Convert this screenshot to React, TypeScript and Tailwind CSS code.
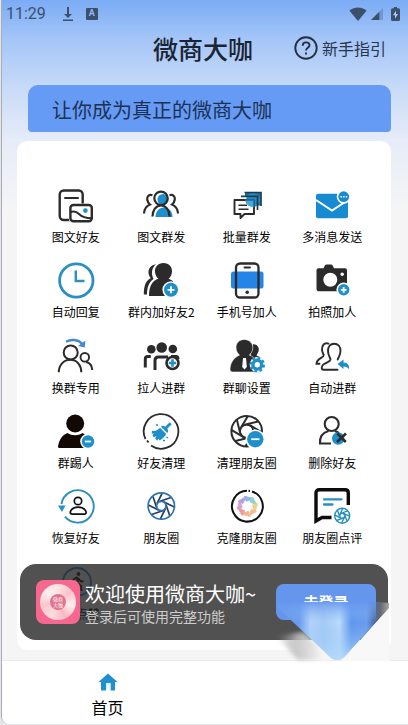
import type { ReactNode } from 'react'

interface MenuItem {
  label: string
  icon: ReactNode
}

const DARK = '#2b2b2b'
const BLUE = '#1f8fcb'

const Badge = ({ cx, cy, r, plus = false }: { cx: number; cy: number; r: number; plus?: boolean }) => (
  <>
    <circle cx={cx} cy={cy} r={r + 1.6} fill="#fff" />
    <circle cx={cx} cy={cy} r={r} fill={BLUE} />
    <path
      d={`M${cx - r / 2} ${cy}h${r}${plus ? `M${cx} ${cy - r / 2}v${r}` : ''}`}
      stroke="#fff"
      strokeWidth="1.8"
    />
  </>
)

// Camera shutter: each blade edge runs from the inner opening to the rim
const Aperture = ({ cx, cy, r, inner, ring, blade, width = 1.8 }: {
  cx: number
  cy: number
  r: number
  inner: number
  ring: string
  blade: string
  width?: number
}) => (
  <g transform={`translate(${cx} ${cy})`} strokeWidth={width} fill="none">
    {[0, 45, 90, 135, 180, 225, 270, 315].map(angle => (
      <path
        key={angle}
        d={`M${-inner * 0.3} ${-inner}L${r * 0.74} ${-r * 0.64}`}
        stroke={blade}
        transform={`rotate(${angle})`}
      />
    ))}
    <circle r={inner} stroke={ring} />
    <circle r={r} stroke={ring} />
  </g>
)

const Icon = ({ children }: { children: ReactNode }) => (
  <svg viewBox="0 0 36 36" className="h-9 w-9 overflow-visible" fill="none" aria-hidden="true">
    {children}
  </svg>
)

const wheelColors = ['#f0b48e', '#ec9a9a', '#d99fcf', '#b3a0dc', '#93b2e3', '#8fd3d3', '#f3cf84', '#f2bd95']

const menuItems: MenuItem[] = [
  {
    label: '图文好友',
    icon: (
      <Icon>
        <rect x="1.7" y="3.5" width="23" height="29.5" rx="4" stroke={DARK} strokeWidth="2.4" />
        <path d="M7 11h13" stroke={DARK} strokeWidth="2" strokeLinecap="round" />
        <rect x="11" y="16.5" width="25" height="19" rx="3" fill="#fff" />
        <rect x="12.4" y="18" width="21.4" height="16.2" rx="3" stroke={DARK} strokeWidth="2.4" />
        <path d="M12.5 25c4-1.5 6-.5 8.5 2s5 4.2 12.5 4.2" stroke={DARK} strokeWidth="2" />
        <circle cx="27.4" cy="23.6" r="2.3" fill={BLUE} />
      </Icon>
    ),
  },
  {
    label: '图文群发',
    icon: (
      <Icon>
        <circle cx="20" cy="12.5" r="5.5" fill={BLUE} />
        <path d="M12.5 30c0-5.5 3.5-9.500 8.500-9.500s8.500 4 8.500 9.500z" fill={BLUE} />
        <circle cx="18" cy="11.3" r="6.7" stroke={DARK} strokeWidth="2.2" />
        <path
          d="M9.5 29.500c0-6.5 3.5-11 8.500-11s8.500 4.500 8.500 11M9.500 8.200C6 7 3.800 9.500 4.200 12.500c.3 2.200 1.300 3.800 2.800 5C3.500 19 1.200 22 1 26.500M26.500 8.200c3.500-1.200 5.700 1.300 5.300 4.300-.3 2.200-1.300 3.800-2.800 5 3.500 1.500 5.800 4.500 6 9"
          stroke={DARK}
          strokeWidth="2.2"
        />
      </Icon>
    ),
  },
  {
    label: '批量群发',
    icon: (
      <Icon>
        <path d="M16 5.5h15.500v13H28V9H16z" fill="#1b6f9d" />
        <circle cx="24" cy="13" r="7" fill={BLUE} />
        <path d="M15.500 5.500H32V19M12 9.300h16.500V23" stroke="#22394a" strokeWidth="1.700" />
        <path d="M5.500 13h19.500v14h-9.500l-4 4v-4h-6z" fill="#fff" stroke={DARK} strokeWidth="1.900" strokeLinejoin="round" />
        <path d="M16 12.200h9.600V20a8 8 0 0 1-9.600-7.800" fill={BLUE} opacity=".8" />
        <path d="M9.500 18.300H18M9.500 22.300h10" stroke={DARK} strokeWidth="1.600" />
      </Icon>
    ),
  },
  {
    label: '多消息发送',
    icon: (
      <Icon>
        <rect x="2" y="6.700" width="32" height="24.500" rx="2" fill="#168bd2" />
        <path d="m2 13 16 10.500L34 13" stroke="#fff" strokeWidth="2" />
        <circle cx="29.700" cy="9.700" r="7" fill="#fff" />
        <circle cx="29.700" cy="9.700" r="5.400" fill="#168bd2" />
        <path d="M26.500 9.700h6.800" stroke="#fff" strokeWidth="1.500" strokeDasharray="1.500 1.100" />
      </Icon>
    ),
  },
  {
    label: '自动回复',
    icon: (
      <Icon>
        <circle cx="18.300" cy="18.500" r="16.700" stroke="#2b8fc2" strokeWidth="2.800" />
        <path d="M17.800 8.500V19h8.700" stroke="#2b8fc2" strokeWidth="2.400" />
      </Icon>
    ),
  },
  {
    label: '群内加好友2',
    icon: (
      <Icon>
        <path d="M13 2.300C8 3 5 6.800 5.500 11c.3 2.500 1.300 4 2.300 5.200C3.500 18 .8 22.500.8 32.500H4C4 25 6 20.500 10.500 17 8 12 8.500 6 13 2.300" fill={DARK} />
        <path d="M20.500 1c-5.500 0-9 4-8.500 9 .3 3 1.500 5.200 3.500 6.800C9.500 18.500 6 24 6 34h29c0-9-3-15-9.500-17.200 2-1.600 3.200-3.800 3.500-6.800.5-5-3-9-8.500-9" fill={DARK} />
        <path d="M30 18h7v16h-7z" fill="#fff" />
        <Badge cx={28} cy={27.8} r={7} plus />
      </Icon>
    ),
  },
  {
    label: '手机号加人',
    icon: (
      <Icon>
        <rect x="2" y="9.500" width="32.500" height="17" rx="2.500" fill="#2584e8" />
        <rect x="7" y="1.500" width="22.500" height="34" rx="4" stroke={DARK} strokeWidth="2.300" />
        <path d="M15.500 5.500H21" stroke={DARK} strokeWidth="1.800" strokeLinecap="round" />
        <circle cx="18.200" cy="30.300" r="1.800" fill={DARK} />
      </Icon>
    ),
  },
  {
    label: '拍照加人',
    icon: (
      <Icon>
        <path d="M4.500 6.200h5L11 3.300q.5-.8 1.500-.8h4.500q1 0 1.500.8L20 6.200h11q2 0 2 2v19q0 2-2 2H4.500q-2 0-2-2v-19q0-2 2-2" fill={DARK} />
        <circle cx="16.300" cy="17.800" r="7" fill="#fff" />
        <circle cx="28.200" cy="12.200" r="1.700" fill="#fff" />
        <Badge cx={29.7} cy={27.8} r={5.7} plus />
      </Icon>
    ),
  },
  {
    label: '换群专用',
    icon: (
      <Icon>
        <circle cx="12.700" cy="14.500" r="7" stroke={DARK} strokeWidth="2" />
        <circle cx="26.800" cy="19.300" r="4.300" stroke={DARK} strokeWidth="1.900" />
        <path d="M.8 34.300c0-7 4.800-12.500 11.500-12.500s11 5.500 11 12.500M28 24c4 .7 6 3.500 6.300 8" stroke={DARK} strokeWidth="2" />
        <path d="M8 3.700C13 1 20 1.200 24.300 6" stroke="#4389cf" strokeWidth="2.400" />
        <path d="m27.500 2.500-.8 7-6.700-1.500z" fill="#4389cf" />
      </Icon>
    ),
  },
  {
    label: '拉人进群',
    icon: (
      <Icon>
        <circle cx="8.300" cy="11.200" r="4.300" fill={DARK} />
        <circle cx="18.700" cy="9.500" r="5.300" fill={DARK} />
        <circle cx="29.800" cy="11" r="4.300" fill={DARK} />
        <path d="M2.300 29.500V21q0-2.500 2.500-2.500h3M12 32v-9.500q0-3.500 3.500-3.500H25M28 18.500h5q2 0 2 2.500" stroke={DARK} strokeWidth="3" />
        <circle cx="29.500" cy="25" r="6" fill="#fff" stroke={DARK} strokeWidth="2.600" />
        <path d="M25.800 25h7.400M29.500 21.300v7.400" stroke={BLUE} strokeWidth="2.600" />
      </Icon>
    ),
  },
  {
    label: '群聊设置',
    icon: (
      <Icon>
        <path d="M24 6.300c5-.5 7.500 5 4.500 9.200l-1 2.200L31 19v5H20z" fill={DARK} />
        <path d="M15.300 1.500c-5 0-8.500 3.500-8.300 8.500.2 3 1.500 5.500 3.500 7C4.500 20 1 25 1 31.500q0 2.500 2.500 2.500H27V23c-1.500-3-4-5-6.700-6 2-1.500 3.300-4 3.500-7 .2-5-3.500-8.500-8.500-8.500" fill={DARK} stroke="#fff" strokeWidth=".6" />
        <path d="M14 20h3l.8 9-2.300 2.500-2.300-2.500z" fill="#fff" />
        <circle cx="28.300" cy="26.700" r="7.600" fill="#fff" />
        <circle cx="28.300" cy="26.700" r="4.400" stroke={BLUE} strokeWidth="3.400" />
        <circle cx="28.300" cy="26.700" r="6.700" stroke={BLUE} strokeWidth="2" strokeDasharray="2.900 2.360" />
      </Icon>
    ),
  },
  {
    label: '自动进群',
    icon: (
      <Icon>
        <path
          d="M14.500 5.600C10.500 4 7.500 7.500 8 12c.2 2 1 3.500 1.700 5 .5 3-7 3-7.200 8.700h3M23.500 31.800H9.500c-2.500 0-2-3.500-.5-5 2.500-2.500 7-2.500 7.500-5.300.2-1.500-2.500-3.500-2.500-8.500 0-4.500 2.500-7.300 6.200-7.300s6.300 2.800 6.300 7.300c0 4.500-2.200 6.500-2.800 8.500"
          stroke={DARK}
          strokeWidth="1.900"
          strokeLinecap="round"
        />
        <path d="m23.500 26 6-4.500v3c4 .2 6 2.500 5.700 7-1.500-2.300-3-3-5.700-3v2.500z" fill={BLUE} />
      </Icon>
    ),
  },
  {
    label: '群踢人',
    icon: (
      <Icon>
        <circle cx="17.200" cy="10.500" r="9" fill="#120804" />
        <path d="M9.500 20c4.500 3 10.500 3 15 0 2.500 1 4 3 4 6v9H1.500Q0 35 0 33.500C1 27 4 22 9.500 20" fill="#120804" />
        <Badge cx={30} cy={28.5} r={6.2} />
      </Icon>
    ),
  },
  {
    label: '好友清理',
    icon: (
      <Icon>
        <path d="M2.500 26A17.300 17.300 0 1 1 8 32.500M4 27.500l1.500 2" stroke={DARK} strokeWidth="1.800" />
        <path d="m26.800 9.300 1.900 1.900-4.500 4.600q2 2.200 0 4.200l-6.300-6.300q2-2 4.200 0z" fill={BLUE} />
        <path d="m17 14.700 6.200 6.200c-1.700 3-3.700 5-6.700 6.700l-1-2-1.300 2.200-2-2.200 1-2.300-2.700 1-1-2.300 1.700-1.500-2.500.2.300-3c3 .8 6-.5 8-3" fill={BLUE} />
        <path d="M20 27.500h2M23.500 24.500h1.600M13 12h2" stroke={BLUE} strokeWidth="1.400" />
      </Icon>
    ),
  },
  {
    label: '清理朋友圈',
    icon: (
      <Icon>
        <Aperture cx={17.7} cy={18.2} r={15.3} inner={6.5} ring={DARK} blade={DARK} width={2} />
        <circle cx="17.700" cy="18.200" r="5.500" fill="#fff" />
        <Badge cx={26.3} cy={26.2} r={8.2} />
      </Icon>
    ),
  },
  {
    label: '删除好友',
    icon: (
      <Icon>
        <circle cx="17.700" cy="11" r="7" stroke={DARK} strokeWidth="2.100" />
        <path d="M17 30.500H6c-.5-7 3-11 8.500-12.500M21 18l4 2" stroke={DARK} strokeWidth="2.100" />
        <circle cx="24.200" cy="25.500" r="6.200" fill={BLUE} />
        <path d="m23.300 20.500 8.500 8.500M32 20.500 23 29" stroke={DARK} strokeWidth="2.500" />
      </Icon>
    ),
  },
  {
    label: '恢复好友',
    icon: (
      <Icon>
        <path d="M7 28.700A16.200 16.200 0 1 0 3.500 16" stroke="#2b8fc2" strokeWidth="1.900" />
        <path d="M0 17.500h7.500L4 24z" fill="#2b8fc2" />
        <circle cx="20" cy="13" r="3.700" stroke="#111" strokeWidth="1.700" />
        <path d="M14.500 26.200h11.500c2 0 2.500-1.500 1.800-3-1.300-2.700-4.300-4-7.600-4s-6.300 1.300-7.600 4c-.7 1.500-.2 3 1.900 3" stroke="#111" strokeWidth="1.700" />
      </Icon>
    ),
  },
  {
    label: '朋友圈',
    icon: (
      <Icon>
        <Aperture cx={18.3} cy={18} r={13.2} inner={4.7} ring="#2f73b7" blade="#25405c" width={1.7} />
      </Icon>
    ),
  },
  {
    label: '克隆朋友圈',
    icon: (
      <Icon>
        <path d="M23 3.500A15.400 15.400 0 1 1 18 2.800M19.500 2.800l1.500.2" stroke="#111" strokeWidth="2" />
        <g transform="translate(18.300 18.300)">
          {wheelColors.map((color, i) => (
            <path key={color} d="M-3-10 6.500-7.800-1.200-5z" fill={color} stroke={color} strokeWidth=".8" transform={`rotate(${i * 45 + 180})`} />
          ))}
        </g>
      </Icon>
    ),
  },
  {
    label: '朋友圈点评',
    icon: (
      <Icon>
        <path d="M34.300 17V5q0-3.200-3.200-3.200H5.200Q2 1.800 2 5v28l6-3.500h9.500" stroke="#0c0c0c" strokeWidth="3.400" />
        <path d="M10 11.300h17.500M10 16.500h8.500" stroke="#2b8fc2" strokeWidth="2.300" strokeLinecap="round" />
        <Aperture cx={28.2} cy={27.7} r={7.5} inner={2.5} ring="#2b8fc2" blade="#2b8fc2" width={1.4} />
      </Icon>
    ),
  },
  {
    label: '自动点赞',
    icon: (
      <Icon>
        <circle cx="19" cy="18" r="14" stroke={BLUE} strokeWidth="2" />
        <circle cx="20.500" cy="10" r="1.900" fill="#111" />
        <path d="m19 13-3.500 2.500-.5 3M19 13l1 6 3 3 .5 5M19.500 19l-2 4-3 3.500M20 14l2.500 3 3 .5" stroke="#111" strokeWidth="1.900" />
      </Icon>
    ),
  },
]

const StatusBar = () => (
  <div className="flex h-7 items-center justify-between pl-1 pr-2 text-[#3c506e]">
    <div className="flex items-center">
      <span className="font-[Roboto] text-base">11:29</span>
      <svg viewBox="0 0 12 16" className="ml-4 h-4 w-3" aria-hidden="true">
        <path d="M5 1h2v7h3l-4 4-4-4h3zM1 13.500h10V15H1z" fill="currentColor" />
      </svg>
      <span className="ml-3 flex h-3 w-3 items-center justify-center rounded-[1px] bg-[#3c506e] font-[Roboto] text-[9px] font-bold text-[#8db7f6]">
        A
      </span>
    </div>
    <div className="flex items-center">
      <svg viewBox="0 0 18 14" className="h-3.5 w-[18px]" aria-hidden="true">
        <path d="M.5 3.800C5.500-.6 12.500-.6 17.500 3.800L9 14z" fill="currentColor" />
      </svg>
      <svg viewBox="0 0 13 13" className="ml-1 h-3 w-3" aria-hidden="true">
        <path d="M13 0v13H0z" fill="currentColor" opacity=".3" />
        <path d="M9 4v9H0z" fill="currentColor" />
      </svg>
      <svg viewBox="0 0 9 14" className="ml-2 h-3.5 w-[9px]" aria-hidden="true">
        <path d="M3 0h3v1.300h1.500q1.500 0 1.500 1.500v9.700Q9 14 7.500 14h-6Q0 14 0 12.500V2.800q0-1.500 1.500-1.500H3z" fill="currentColor" />
        <path d="M5 3.500 2 8.300h2v3.500L7 7H5z" fill="#a9c9f8" />
      </svg>
    </div>
  </div>
)

// Glowing wedge that falls from the login button over the panel's corner
const LightBeam = () => (
  <svg viewBox="0 0 124 64" className="pointer-events-none absolute -right-1 top-9 h-16 w-[124px] overflow-visible" aria-hidden="true">
    <defs>
      <linearGradient id="beam" x1="0" x2="1" y1="0" y2="0">
        <stop offset="0" stopColor="#5c90e8" />
        <stop offset=".2" stopColor="#6a9df0" />
        <stop offset=".3" stopColor="#b3d3f8" />
        <stop offset=".42" stopColor="#a5caf6" />
        <stop offset=".56" stopColor="#b9dbfa" />
        <stop offset=".66" stopColor="#5f97ee" />
        <stop offset=".8" stopColor="#699cec" />
        <stop offset=".87" stopColor="#4a6ca8" />
        <stop offset=".92" stopColor="#63676e" />
        <stop offset="1" stopColor="#a4a7ab" />
      </linearGradient>
      <linearGradient id="beamFade" x1="0" x2="0" y1="0" y2="1">
        <stop offset="0" stopColor="#6496ee" stopOpacity=".9" />
        <stop offset=".35" stopColor="#8fbaf5" stopOpacity="0" />
        <stop offset="1" stopColor="#b4dcfb" stopOpacity=".85" />
      </linearGradient>
      <linearGradient id="haze" x1="0" x2="1" y1="0" y2="0">
        <stop offset="0" stopColor="#8a8a8a" stopOpacity="0" />
        <stop offset=".35" stopColor="#bdbdbd" stopOpacity=".8" />
        <stop offset=".8" stopColor="#f6f6f6" />
      </linearGradient>
      <filter id="soft" x="-20%" y="-20%" width="140%" height="140%">
        <feGaussianBlur stdDeviation="2" />
      </filter>
    </defs>
    <path d="M8 36 36 32l30 28H30z" fill="url(#haze)" filter="url(#soft)" />
    <path d="M121 7v54H74z" fill="#f8f8f8" />
    <path d="M9 2h101l11 1v5L78 55q-4 5-9 5t-9-5L9 7z" fill="url(#beam)" />
    <path d="M9 2h99L108 22 78 55q-4 5-9 5t-9-5L9 7z" fill="url(#beamFade)" />
  </svg>
)

const LoginPrompt = () => (
  <section className="absolute right-5 bottom-5 left-[18px] flex h-[76px] items-center rounded-2xl bg-[#262626]/80 pl-4 pr-3">
    <div className="flex h-11 w-11 shrink-0 items-center justify-center rounded-lg bg-[#f7678f]">
      <div className="flex h-9 w-9 items-center justify-center rounded-full bg-[conic-gradient(#fbe3e3,#f9c3c9,#fdeeee,#f8b9c3,#fbdcdc,#f9c6cc,#fdeeee,#fbe3e3)]">
        <div className="flex h-4 w-4 flex-col items-center justify-center rounded-full bg-[#e2738f] text-[5px] leading-[6px] text-white">
          <span>微商</span>
          <span>大咖</span>
        </div>
      </div>
    </div>
    <div className="ml-1 flex-1 pl-px whitespace-nowrap">
      <h2 className="text-xl leading-7 text-white">欢迎使用微商大咖~</h2>
      <p className="text-sm leading-4 text-[#cccccc]">登录后可使用完整功能</p>
    </div>
    <button type="button" className="h-9 w-[100px] shrink-0 rounded-lg bg-[#6496ee] text-[15px] font-bold text-white">
      去登录
    </button>
    <LightBeam />
  </section>
)

const BottomNav = () => (
  <nav className="flex h-16 border-t border-[#ececec] bg-white">
    <a href="#home" className="flex w-[52%] flex-col items-center pt-3">
      <svg viewBox="0 0 20 18" className="h-[18px] w-5" aria-hidden="true">
        <path d="M10 .5 19.500 9H17v8.500h-4.500V10H8v7.500H3V9H.5z" fill="#1f8fcf" />
        <path d="M8 10h4.500v7.500H11V12H9.500v4H8z" fill="#d9effa" />
      </svg>
      <span className="mt-1 text-base leading-6 text-black">首页</span>
    </a>
  </nav>
)

export default function App() {
  return (
    <div className="flex min-h-screen bg-[#e4e6ea] pb-px pl-px font-['Noto_Sans_CJK_SC',sans-serif]">
      <div className="flex flex-1 flex-col overflow-hidden rounded-bl-lg border-l border-[#a9adb3] bg-[#f5f5f5] bg-[linear-gradient(#7bacf4_0px,#a5c6f8_40px,#c9dbf8_90px,#e6ecf8_140px,#f5f5f5_210px)]">
        <StatusBar />
        <header className="grid grid-cols-[1fr_auto_1fr] items-center pt-1 pr-1">
          <h1 className="col-start-2 text-[25px] leading-8 font-medium text-[#1b2433]">微商大咖</h1>
          <a href="#guide" className="flex items-center gap-1 justify-self-end pr-[18px] text-base text-[#28344a]">
            <svg viewBox="0 0 24 24" className="h-6 w-6" fill="none" stroke="#26303f" strokeWidth="1.900" aria-hidden="true">
              <circle cx="12" cy="12" r="10.700" />
              <path d="M8.700 9.700c0-4.500 6.800-4.300 6.800-.4 0 2.500-3.500 2.500-3.500 5.200M12 16.500v2" />
            </svg>
            新手指引
          </a>
        </header>
        <div className="mt-[21px] mr-[17px] ml-[26px] rounded-t-[10px] rounded-b-sm bg-[#659bf4] px-6 pt-[11px] pb-2 text-xl leading-7 text-[#1d3154]">
          让你成为真正的微商大咖
        </div>
        <main className="relative flex flex-1 flex-col pb-[10px]">
          <div className="mt-[9px] mr-[17px] ml-[15px] flex flex-1 flex-col rounded-[10px] bg-white px-4 pt-[46px] pb-[11px]">
            <ul className="grid flex-1 auto-rows-fr grid-cols-4">
              {menuItems.map(item => (
                <li key={item.label} className="flex justify-center">
                  <button type="button" className="flex flex-col items-center gap-1 self-start">
                    {item.icon}
                    <span className="text-xs leading-5 whitespace-nowrap text-black">{item.label}</span>
                  </button>
                </li>
              ))}
            </ul>
          </div>
          <LoginPrompt />
        </main>
        <BottomNav />
      </div>
    </div>
  )
}
